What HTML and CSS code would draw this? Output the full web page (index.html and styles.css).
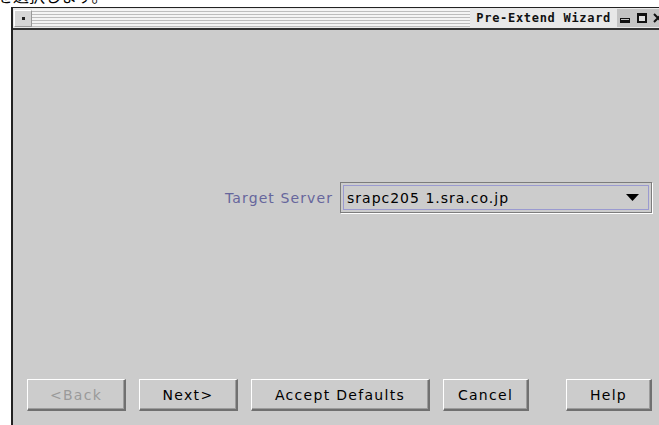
FILE: index.html
```html
<!DOCTYPE html>
<html lang="ja">
<head>
<meta charset="utf-8">
<title>Pre-Extend Wizard</title>
<link rel="stylesheet" href="styles.css">
</head>
<body>
  <div class="caption"><p class="caption-text">を選択します。</p></div>
  <div class="window">
    <div class="titlebar">
      <div class="menu-btn"><span class="menu-dot"></span></div>
      <div class="stripes"></div>
      <span class="title">Pre-Extend Wizard</span>
      <div class="controls">
        <span class="ctl ctl-min"></span>
        <span class="ctl ctl-max"></span>
        <span class="ctl ctl-close">
          <svg width="10" height="10" viewBox="0 0 10 10"><path d="M1 1L9 9M9 1L1 9" stroke="#111" stroke-width="2"/></svg>
        </span>
      </div>
    </div>
    <div class="content">
      <div class="form-row">
        <label class="field-label">Target Server</label>
        <div class="combo">
          <div class="combo-inner">
            <span class="combo-value">srapc205 1.sra.co.jp</span>
            <svg class="combo-arrow" width="13" height="7" viewBox="0 0 13 7"><path d="M0 0H13L6.5 7Z" fill="#000"/></svg>
          </div>
        </div>
      </div>
      <div class="button-row">
        <button class="btn btn-nav disabled">&lt;Back</button>
        <button class="btn btn-nav">Next&gt;</button>
        <button class="btn btn-wide">Accept Defaults</button>
        <button class="btn btn-small">Cancel</button>
        <button class="btn btn-small btn-help">Help</button>
      </div>
    </div>
  </div>
</body>
</html>
```
FILE: styles.css
```css
html, body {
  margin: 0;
  padding: 0;
  background: #ffffff;
  width: 659px;
  height: 425px;
  overflow: hidden;
}

.caption {
  height: 7px;
  overflow: hidden;
}

.caption-text {
  margin: -15px 0 0 -3px;
  font-family: "Noto Sans CJK JP", sans-serif;
  font-size: 16px;
  line-height: 20px;
  color: #000;
}

.window {
  margin-left: 11px;
  width: 656px;
  height: 418px;
  border-top: 1px solid #222;
  border-left: 2px solid #222;
  background: #cccccc;
  display: flex;
  flex-direction: column;
}

.titlebar {
  height: 20px;
  border-bottom: 2px solid #333;
  display: flex;
  align-items: center;
  background: #e8e8e8;
}

.menu-btn {
  width: 16px;
  height: 15px;
  margin-left: 1px;
  background: #d6d6d6;
  border-top: 1px solid #fff;
  border-left: 1px solid #fff;
  border-right: 1px solid #999;
  border-bottom: 1px solid #999;
  display: flex;
  align-items: center;
  justify-content: center;
}

.menu-dot {
  width: 3px;
  height: 3px;
  background: #222;
}

.stripes {
  flex: 1;
  height: 18px;
  background: repeating-linear-gradient(to bottom, #f4f4f4 0 2px, #bdbdbd 2px 3px);
}

.title {
  font-family: "DejaVu Sans Mono", monospace;
  font-size: 12px;
  font-weight: bold;
  letter-spacing: 0.7px;
  color: #111;
  padding: 0 6px;
  background: #e8e8e8;
  line-height: 18px;
}

.controls {
  display: flex;
  align-items: center;
  gap: 7px;
  height: 18px;
  padding: 0 6px 0 3px;
  background: #c4c4c4;
}

.ctl {
  width: 10px;
  height: 10px;
  display: flex;
  align-items: center;
  justify-content: center;
  box-sizing: border-box;
}

.ctl-min::before {
  content: "";
  display: block;
  width: 10px;
  height: 5px;
  box-sizing: border-box;
  border: 1px solid #111;
  border-bottom-width: 3px;
  margin-top: 5px;
}

.ctl-max {
  border: 2px solid #111;
  border-top-width: 3px;
  background: #e0e0e0;
}

.ctl-close {
  margin-left: -1px;
}

.content {
  flex: 1;
  display: flex;
  flex-direction: column;
}

.form-row {
  display: flex;
  align-items: center;
  justify-content: flex-end;
  margin-top: 152px;
  padding-right: 17px;
  gap: 7px;
}

.field-label {
  font-family: "DejaVu Sans", sans-serif;
  font-size: 14px;
  letter-spacing: 1.1px;
  color: #66669c;
}

.combo {
  width: 312px;
  height: 31px;
  box-sizing: border-box;
  border: 1px solid #7c7c7c;
  box-shadow: 1px 1px 0 #ffffff;
  padding: 2px;
}

.combo-inner {
  height: 100%;
  box-sizing: border-box;
  border: 1px solid #9a9ad0;
  display: flex;
  align-items: center;
  padding: 0 9px 0 3px;
}

.combo-value {
  flex: 1;
  font-family: "DejaVu Sans", sans-serif;
  font-size: 14px;
  letter-spacing: 1px;
  color: #000;
}

.combo-arrow {
  display: block;
}

.button-row {
  display: flex;
  margin-top: 166px;
  padding-left: 14px;
  gap: 13px;
}

.btn {
  height: 32px;
  box-sizing: border-box;
  background: #cccccc;
  border-style: solid;
  border-width: 1px 2px 2px 1px;
  border-color: #ffffff #707070 #707070 #ffffff;
  box-shadow: inset -1px -1px 0 #9c9c9c;
  font-family: "DejaVu Sans", sans-serif;
  font-size: 14px;
  letter-spacing: 1.3px;
  color: #000;
  padding: 0;
}

.btn.disabled {
  color: #9a9a9a;
}

.btn-nav { width: 99px; }
.btn-wide { width: 179px; }
.btn-small { width: 86px; }
.btn-help { margin-left: 24px; }
```
